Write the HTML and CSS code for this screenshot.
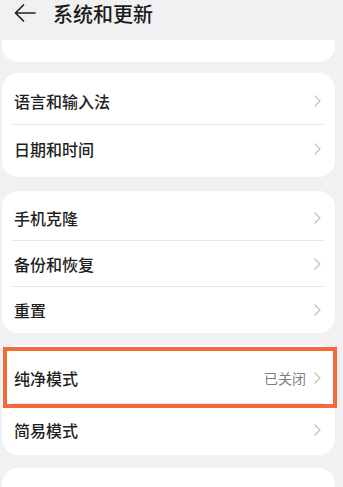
FILE: index.html
```html
<!DOCTYPE html>
<html lang="zh-CN">
<head>
    <meta charset="UTF-8">
    <meta name="viewport" content="width=device-width, initial-scale=1.0">
    <title>系统和更新</title>
    <link rel="stylesheet" href="styles.css">
</head>
<body>
    <header class="topbar">
        <svg class="back" width="22" height="18" viewBox="0 0 22 18">
            <path d="M1.5 9 H21 M9.5 1 L1.5 9 L9.5 17" fill="none" stroke="#222" stroke-width="1.7" stroke-linecap="round" stroke-linejoin="round"/>
        </svg>
        <h1>系统和更新</h1>
    </header>

    <div class="list">
        <div class="card cut">
            <div class="row">
                <span class="label">系统导航方式</span>
                <svg class="chev" width="7" height="12" viewBox="0 0 7 12"><path d="M1 1 L6 6 L1 11" fill="none" stroke="#c4c4c4" stroke-width="1.4" stroke-linecap="round" stroke-linejoin="round"/></svg>
            </div>
        </div>

        <div class="card">
            <div class="row">
                <span class="label">语言和输入法</span>
                <svg class="chev" width="7" height="12" viewBox="0 0 7 12"><path d="M1 1 L6 6 L1 11" fill="none" stroke="#c4c4c4" stroke-width="1.4" stroke-linecap="round" stroke-linejoin="round"/></svg>
            </div>
            <div class="row">
                <span class="label">日期和时间</span>
                <svg class="chev" width="7" height="12" viewBox="0 0 7 12"><path d="M1 1 L6 6 L1 11" fill="none" stroke="#c4c4c4" stroke-width="1.4" stroke-linecap="round" stroke-linejoin="round"/></svg>
            </div>
        </div>

        <div class="card compact">
            <div class="row">
                <span class="label">手机克隆</span>
                <svg class="chev" width="7" height="12" viewBox="0 0 7 12"><path d="M1 1 L6 6 L1 11" fill="none" stroke="#c4c4c4" stroke-width="1.4" stroke-linecap="round" stroke-linejoin="round"/></svg>
            </div>
            <div class="row">
                <span class="label">备份和恢复</span>
                <svg class="chev" width="7" height="12" viewBox="0 0 7 12"><path d="M1 1 L6 6 L1 11" fill="none" stroke="#c4c4c4" stroke-width="1.4" stroke-linecap="round" stroke-linejoin="round"/></svg>
            </div>
            <div class="row">
                <span class="label">重置</span>
                <svg class="chev" width="7" height="12" viewBox="0 0 7 12"><path d="M1 1 L6 6 L1 11" fill="none" stroke="#c4c4c4" stroke-width="1.4" stroke-linecap="round" stroke-linejoin="round"/></svg>
            </div>
        </div>

        <div class="card modes">
            <div class="highlight"></div>
            <div class="row">
                <span class="label">纯净模式</span>
                <span class="value">已关闭</span>
                <svg class="chev" width="7" height="12" viewBox="0 0 7 12"><path d="M1 1 L6 6 L1 11" fill="none" stroke="#c4c4c4" stroke-width="1.4" stroke-linecap="round" stroke-linejoin="round"/></svg>
            </div>
            <div class="row">
                <span class="label">简易模式</span>
                <svg class="chev" width="7" height="12" viewBox="0 0 7 12"><path d="M1 1 L6 6 L1 11" fill="none" stroke="#c4c4c4" stroke-width="1.4" stroke-linecap="round" stroke-linejoin="round"/></svg>
            </div>
        </div>

        <div class="card empty"></div>
    </div>
</body>
</html>
```

FILE: styles.css
```css
* {
  box-sizing: border-box;
  margin: 0;
  padding: 0;
}

body {
  --bg: #f1f1f3;
  --card: #ffffff;
  --text: #1f1f1f;
  --muted: #7e7e7e;
  --line: #e8e8e8;
  --mark: #f2693b;

  background: var(--bg);
  color: var(--text);
  font-family: "Noto Sans CJK SC", "Noto Sans", sans-serif;
  width: 343px;
  height: 487px;
  overflow: hidden;
}

.topbar {
  height: 40px;
  display: flex;
  align-items: flex-start;
  padding: 4px 0 0 14px;
  gap: 17px;
}

.topbar h1 {
  font-size: 20px;
  font-weight: 500;
  line-height: 20px;
  color: #1a1a1a;
}

.list {
  overflow: hidden;
  padding: 0 8px 0 2px;
  display: flex;
  flex-direction: column;
  gap: 11px;
  height: 447px;
}

.card {
  background: var(--card);
  border-radius: 16px;
  padding: 4px 0;
  position: relative;
  flex-shrink: 0;
}

/* tarjeta que queda tapada por la barra de arriba */
.cut {
  margin-top: -39px;
  padding-bottom: 9px;
  color: #555;
}

.compact {
  margin-top: 3px;
  padding-bottom: 0;
}

.compact .row {
  height: 46px;
}

.modes {
  margin-top: 1px;
  padding: 8px 0 0;
}

.modes .row {
  height: 51px;
}

.row {
  height: 48px;
  margin: 0 11px 0 10px;
  padding: 0 3px 0 2px;
  display: flex;
  align-items: center;
  border-bottom: 1px solid var(--line);
}

.row:last-child {
  border-bottom: none;
}

.label {
  flex: 1;
  font-size: 16px;
  font-weight: 500;
}

.value {
  font-size: 14px;
  color: var(--muted);
  margin-right: 8px;
}

.chev {
  display: block;
}

/* marco naranja sobre la fila */
.highlight {
  position: absolute;
  left: 1px;
  right: -2px;
  top: 2px;
  height: 61px;
  border: 4px solid var(--mark);
  pointer-events: none;
}

.empty {
  margin-top: 2px;
  height: 60px;
}
```
